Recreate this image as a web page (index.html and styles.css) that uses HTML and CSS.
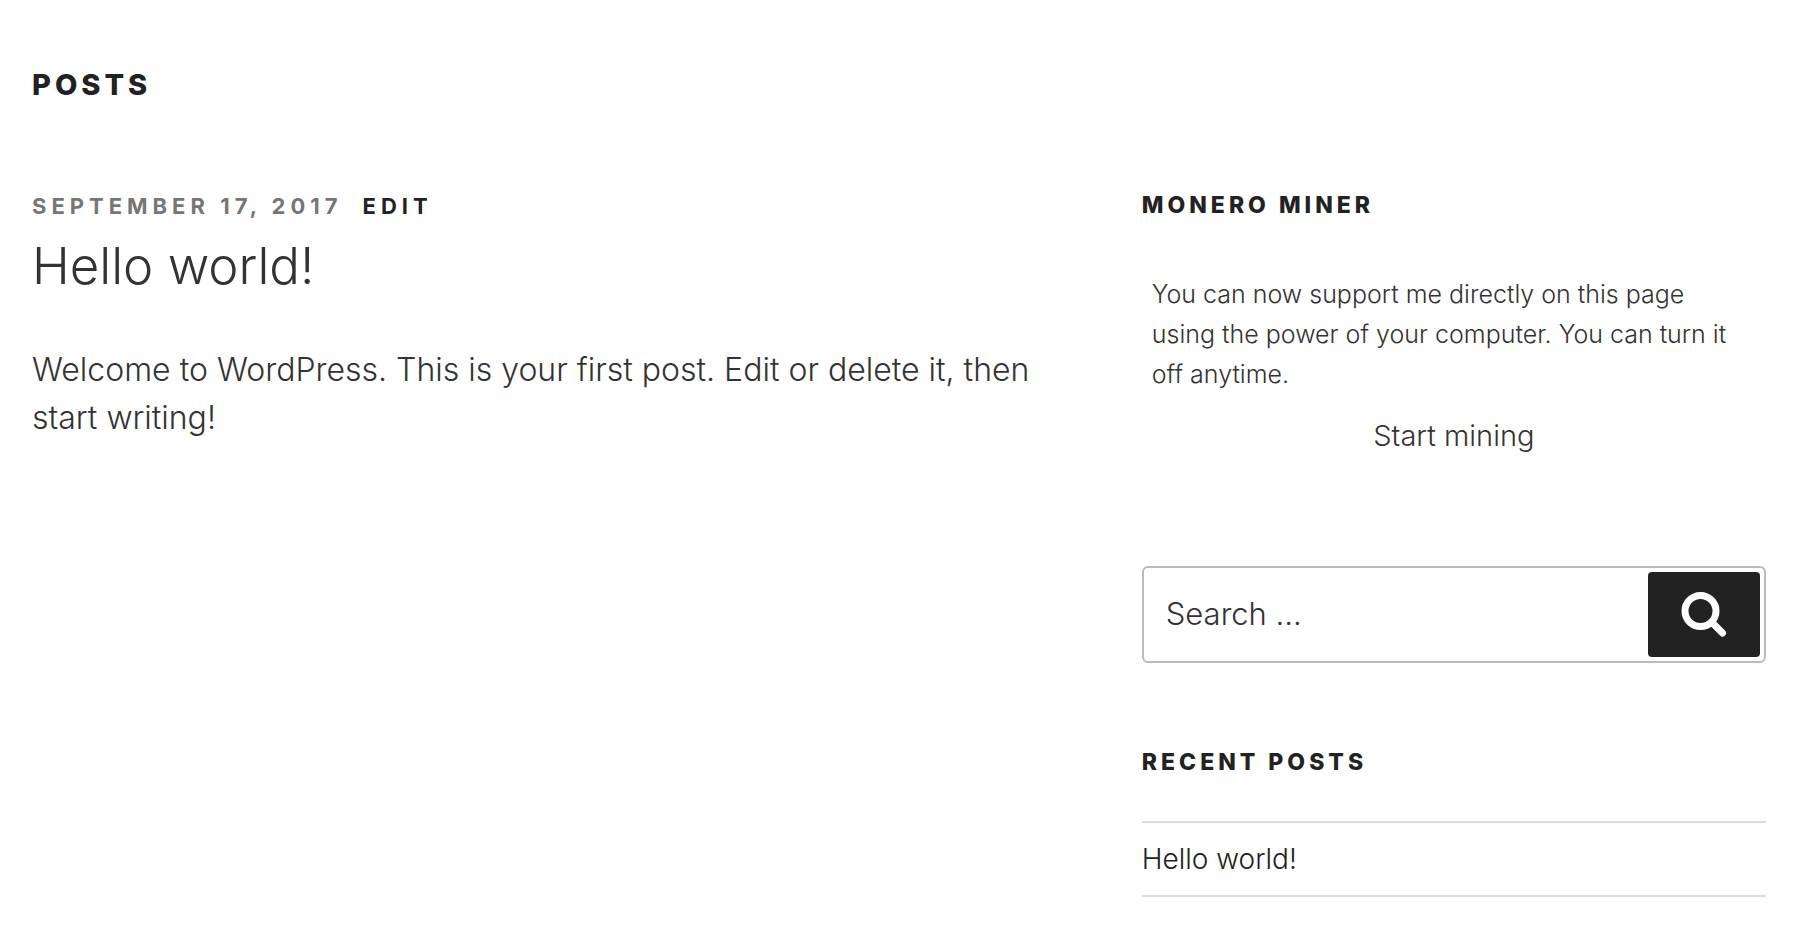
FILE: index.html
```html
<!DOCTYPE html>
<html lang="en">
<head>
<meta charset="utf-8">
<title>Posts</title>
<link rel="stylesheet" href="styles.css">
</head>
<body>
<div class="wrap">
  <header class="page-header"><h2 class="page-title">Posts</h2></header>
  <div class="columns">
    <main class="primary">
      <article>
        <div class="entry-meta"><time datetime="2017-09-17">September 17, 2017</time><a href="#edit">Edit</a></div>
        <h3 class="entry-title"><a href="#post">Hello world!</a></h3>
        <p class="entry-content">Welcome to WordPress. This is your first post. Edit or delete it, then start writing!</p>
      </article>
    </main>
    <aside class="secondary">
      <section class="miner">
        <h2 class="widget-title">Monero Miner</h2>
        <p class="miner-text">You can now support me directly on this page using the power of your computer. You can turn it off anytime.</p>
        <button class="miner-start" type="button">Start mining</button>
      </section>
      <form class="search" role="search">
        <input class="search-field" type="search" placeholder="Search …" aria-label="Search for:">
        <button class="search-submit" type="submit" aria-label="Search">
          <svg class="search-icon" viewBox="0 0 46 46" aria-hidden="true">
            <circle cx="19.500" cy="19" r="15.500" fill="none" stroke="#fff" stroke-width="7"/>
            <path d="M31 30.500l10.500 10.500" stroke="#fff" stroke-width="7" stroke-linecap="round"/>
          </svg>
        </button>
      </form>
      <section>
        <h2 class="widget-title">Recent Posts</h2>
        <ul class="recent"><li><a href="#post">Hello world!</a></li></ul>
      </section>
    </aside>
  </div>
</div>
</body>
</html>
```
FILE: styles.css
```css
* { box-sizing: border-box; }
body {
  margin: 0;
  background: #fff;
  color: #333;
  font-family: Inter, "Liberation Sans", sans-serif;
  font-size: 32px;
  font-weight: 300;
  line-height: 48px;
}
h2, h3, p, ul { margin: 0; padding: 0; }
a { color: #222; text-decoration: none; }
.wrap { padding: 64px 36px 48px 32px; }
.page-title {
  color: #222;
  font-size: 29px;
  font-weight: 800;
  line-height: 42px;
  letter-spacing: 4px;
  text-transform: uppercase;
}
.columns {
  display: flex;
  justify-content: space-between;
  align-items: flex-start;
  margin-top: 80px;
}
.primary { width: 58%; }
.secondary { width: 36%; }
.entry-meta {
  display: flex;
  gap: 20px;
  color: #767676;
  font-size: 22px;
  font-weight: 700;
  line-height: 40px;
  letter-spacing: 5px;
  text-transform: uppercase;
}
.entry-title {
  font-size: 51px;
  font-weight: 300;
  line-height: 72px;
  margin-top: 4px;
}
.entry-title a { color: #333; }
.entry-content { margin-top: 44px; }
.widget-title {
  color: #222;
  font-size: 23px;
  font-weight: 800;
  line-height: 38px;
  letter-spacing: 4px;
  text-transform: uppercase;
}
.miner { display: flex; flex-direction: column; }
.miner-text {
  margin-top: 46px;
  padding: 4px 24px 0 10px;
  font-size: 25px;
  line-height: 40px;
}
.miner-start {
  align-self: center;
  margin-top: 20px;
  padding: 0;
  border: 0;
  background: none;
  color: #333;
  font: inherit;
  font-size: 29px;
  line-height: 44px;
  cursor: pointer;
}
.search {
  display: flex;
  height: 97px;
  margin: 108px 0 80px;
  padding: 4px;
  border: 2px solid #bbb;
  border-radius: 6px;
}
.search-field {
  flex: 1;
  min-width: 0;
  padding: 0 18px 2px;
  border: 0;
  outline: 0;
  background: none;
  color: #333;
  font: inherit;
  font-size: 31px;
}
.search-field::placeholder { color: #333; opacity: 1; }
.search-submit {
  display: flex;
  align-items: center;
  justify-content: center;
  width: 112px;
  padding: 0;
  border: 0;
  border-radius: 4px;
  background: #222;
  cursor: pointer;
}
.search-icon { width: 46px; height: 46px; }
.recent { margin-top: 40px; list-style: none; }
.recent li {
  padding: 14px 0;
  border-top: 2px solid #ddd;
  border-bottom: 2px solid #ddd;
  font-size: 28px;
  line-height: 44px;
}
```
